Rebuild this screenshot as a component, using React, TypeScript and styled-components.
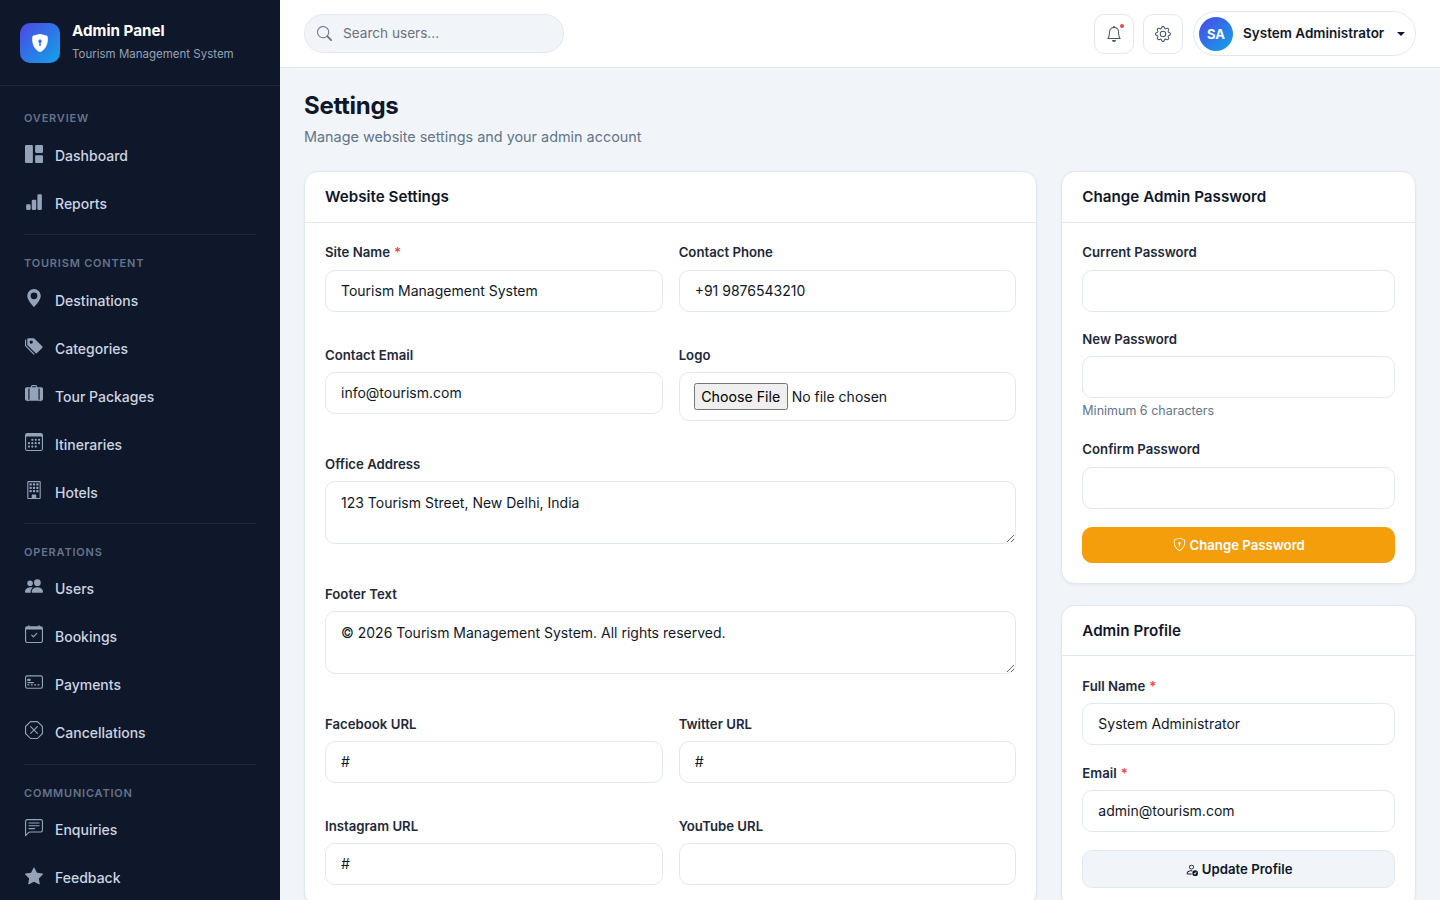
import React from "react";
import styled, { createGlobalStyle } from "styled-components";
import {
  BsBarChartFill, BsBell, BsBuilding, BsCalendar3, BsCalendarCheck, BsChatLeftText, BsCreditCard2Front,
  BsGear, BsGeoAltFill, BsGrid1X2Fill, BsPeopleFill, BsPersonCheck, BsSearch, BsShieldLock, BsShieldLockFill,
  BsStarFill, BsSuitcaseLgFill, BsTagsFill, BsXOctagon,
} from "react-icons/bs";

const Global = createGlobalStyle`
  * { box-sizing: border-box; }
  html, body { margin: 0; height: 100%; overflow: hidden; }
  body { font-family: Inter, "Liberation Sans", sans-serif; background: #f1f5f9; color: #0f172a; }
`;

const Shell = styled.div`display: flex; height: 100vh; overflow: hidden;`;
const Sidebar = styled.aside`width: 280px; flex: none; background: #0f172a; height: 100%; overflow: hidden;`;
const Brand = styled.div`display: flex; align-items: center; gap: 12px; height: 86px; padding: 0 20px; border-bottom: 1px solid #1e293b;`;
const BrandIcon = styled.div`
  width: 40px; height: 40px; border-radius: 10px; background: linear-gradient(135deg, #4f46e5, #0ea5e9);
  display: flex; align-items: center; justify-content: center; color: #fff; font-size: 18px;
`;
const BrandText = styled.div`margin-bottom: 3px;`;
const BrandName = styled.div`font-size: 15.2px; line-height: 20px; font-weight: 700; color: #fff;`;
const BrandSub = styled.div`font-size: 11.5px; line-height: 16px; color: #94a3b8; margin-top: 5px;`;
const Nav = styled.nav`padding: 24px 24px 0;`;
const Section = styled.div<{ $lead: number }>`
  border-top: ${(p) => (p.$lead ? "1px solid #1e293b" : "0")};
  margin-top: ${(p) => p.$lead}px;
  padding-top: ${(p) => (p.$lead ? 20 : 0)}px;
`;
const SectionLabel = styled.div<{ $gap: number }>`
  font-size: 11px; line-height: 16px; font-weight: 600; letter-spacing: 0.8px; text-transform: uppercase; color: #64748b; margin-bottom: ${(p) => p.$gap}px;
`;
const NavItem = styled.a`
  display: flex; align-items: center; gap: 12px; height: 48px; color: #cbd5e1; font-size: 14px; font-weight: 500;
  svg { width: 18px; height: 18px; flex: none; color: #94a3b8; position: relative; top: -2px; margin-left: 1px; }
`;

const Main = styled.div`flex: 1; min-width: 0; height: 100%; overflow: hidden;`;
const Topbar = styled.header`
  height: 68px; background: #fff; border-bottom: 1px solid #e2e8f0; padding: 0 24px; display: flex; align-items: center; justify-content: space-between;
`;
const Search = styled.div`
  width: 260px; height: 39px; border-radius: 20px; background: #f1f5f9; border: 1px solid #e2e8f0; display: flex; align-items: center; gap: 11px; padding: 0 12px;
  color: #64748b; svg { width: 15px; height: 15px; flex: none; }
`;
const SearchInput = styled.input`
  border: 0; background: transparent; outline: 0; font: 400 13.6px Inter, sans-serif; flex: 1; min-width: 0; padding: 0 0 2px;
  &::placeholder { color: #6b7280; opacity: 1; }
`;
const Actions = styled.div`display: flex; align-items: center; gap: 9px;`;
const IconButton = styled.button`
  position: relative; width: 40px; height: 40px; border-radius: 10px; background: #fff; border: 1px solid #e2e8f0; color: #475569;
  display: flex; align-items: center; justify-content: center; padding: 0; font-size: 16px;
`;
const Dot = styled.span`position: absolute; top: 9px; right: 9px; width: 4px; height: 4px; border-radius: 50%; background: #ef4444;`;
const UserChip = styled.div`
  height: 45px; width: 223px; margin-left: 1px; border: 1px solid #e2e8f0; border-radius: 23px; background: #fff; display: flex; align-items: center; padding: 0 10px 0 5px;
`;
const Avatar = styled.div`
  width: 34px; height: 34px; border-radius: 50%; background: linear-gradient(135deg, #4f46e5, #0ea5e9); color: #fff; font-size: 13px; font-weight: 700;
  display: flex; align-items: center; justify-content: center; flex: none;
`;
const UserName = styled.span`font-size: 13.5px; font-weight: 600; margin: 0 0 2px 10px; flex: 1; white-space: nowrap; color: #0f172a;`;
const Caret = styled.span`width: 0; height: 0; border-top: 4px solid #0f172a; border-left: 4px solid transparent; border-right: 4px solid transparent;`;

const Content = styled.main`padding: 24px;`;
const Title = styled.h1`margin: 0; font-size: 24px; line-height: 28px; font-weight: 700; letter-spacing: -0.3px; color: #0f172a;`;
const Subtitle = styled.p`margin: 6px 0 23px; font-size: 14.4px; line-height: 22px; color: #64748b;`;
const Columns = styled.div`display: grid; grid-template-columns: minmax(0, 733.33fr) minmax(0, 354.67fr); gap: 24px; align-items: start;`;
const Stack = styled.div`display: flex; flex-direction: column; gap: 21.25px;`;
const Card = styled.section`
  background: #fff; border: 1px solid #e2e8f0; border-radius: 14px; box-shadow: 0 1px 3px rgba(15, 23, 42, 0.05); overflow: hidden;
`;
const CardHeader = styled.div`height: 50.5px; padding: 0 20px 1px; display: flex; align-items: center; border-bottom: 1px solid #e2e8f0;`;
const CardTitle = styled.h2`margin: 0; font-size: 15.2px; font-weight: 600; color: #0f172a;`;
const CardBody = styled.div`padding: 20.75px 20px 20px;`;
const FormGrid = styled.div`display: grid; grid-template-columns: 1fr 1fr; column-gap: 16px; row-gap: 34px;`;
const Field = styled.div<{ $wide?: boolean; $gap?: number }>`
  grid-column: ${(p) => (p.$wide ? "1 / -1" : "auto")};
  margin-bottom: ${(p) => p.$gap ?? 0}px;
`;
const Label = styled.label`display: block; font-size: 13.2px; line-height: 18px; font-weight: 600; margin-bottom: 8.25px; color: #1e293b;`;
const Required = styled.span`color: #ef4444; margin-left: 4px;`;
const Input = styled.input`
  display: block; width: 100%; height: 42px; border: 1px solid #e2e8f0; border-radius: 10px; padding: 0 15px 1px; font: 400 14px Inter, sans-serif; color: #0f172a; background: #fff; outline: 0;
`;
const FileInput = styled(Input)`
  height: 49px; padding: 10px 14px;
  &::file-selector-button { height: 27px; width: 94px; padding: 0; margin-right: 4px; font: 400 14.2px Inter, sans-serif; }
`;
const TextArea = styled.textarea`
  display: block; width: 100%; height: 63px; border: 1px solid #e2e8f0; border-radius: 10px; padding: 10px 15px; font: 400 14px/21px Inter, sans-serif; color: #0f172a; background: #fff; outline: 0;
`;
const Hint = styled.div`font-size: 12.5px; line-height: 16px; color: #64748b; margin-top: 5.25px;`;
const ActionButton = styled.button<{ $primary?: boolean }>`
  width: 100%; height: ${(p) => (p.$primary ? 36 : 38)}px; border-radius: 10px; border: 1px solid ${(p) => (p.$primary ? "#f59e0b" : "#e2e8f0")};
  background: ${(p) => (p.$primary ? "#f59e0b" : "#f1f5f9")}; color: ${(p) => (p.$primary ? "#fff" : "#0f172a")};
  font: 600 13.2px Inter, sans-serif; display: flex; align-items: center; justify-content: center; gap: 4px; padding: 0;
  svg { width: 13px; height: 13px; }
`;

const groups = [
  { label: "Overview", gap: 5.7, lead: 0, items: [[BsGrid1X2Fill, "Dashboard"], [BsBarChartFill, "Reports"]] },
  { label: "Tourism Content", gap: 5.7, lead: 6.1, items: [[BsGeoAltFill, "Destinations"], [BsTagsFill, "Categories"], [BsSuitcaseLgFill, "Tour Packages"], [BsCalendar3, "Itineraries"], [BsBuilding, "Hotels"]] },
  { label: "Operations", gap: 4.7, lead: 6.1, items: [[BsPeopleFill, "Users"], [BsCalendarCheck, "Bookings"], [BsCreditCard2Front, "Payments"], [BsXOctagon, "Cancellations"]] },
  { label: "Communication", gap: 4.7, lead: 7.6, items: [[BsChatLeftText, "Enquiries"], [BsStarFill, "Feedback"]] },
] as const;

export default function App() {
  return (
    <Shell>
      <Global />
      <Sidebar>
        <Brand>
          <BrandIcon><BsShieldLockFill /></BrandIcon>
          <BrandText>
            <BrandName>Admin Panel</BrandName>
            <BrandSub>Tourism Management System</BrandSub>
          </BrandText>
        </Brand>
        <Nav>
          {groups.map((g) => (
            <Section key={g.label} $lead={g.lead}>
              <SectionLabel $gap={g.gap}>{g.label}</SectionLabel>
              {g.items.map(([Icon, name]) => (
                <NavItem key={name}><Icon />{name}</NavItem>
              ))}
            </Section>
          ))}
        </Nav>
      </Sidebar>
      <Main>
        <Topbar>
          <Search><BsSearch /><SearchInput placeholder="Search users..." /></Search>
          <Actions>
            <IconButton><BsBell /><Dot /></IconButton>
            <IconButton><BsGear /></IconButton>
            <UserChip>
              <Avatar>SA</Avatar>
              <UserName>System Administrator</UserName>
              <Caret />
            </UserChip>
          </Actions>
        </Topbar>
        <Content>
          <Title>Settings</Title>
          <Subtitle>Manage website settings and your admin account</Subtitle>
          <Columns>
            <Card>
              <CardHeader><CardTitle>Website Settings</CardTitle></CardHeader>
              <CardBody>
                <FormGrid>
                  <Field><Label>Site Name<Required>*</Required></Label><Input defaultValue="Tourism Management System" /></Field>
                  <Field><Label>Contact Phone</Label><Input defaultValue="+91 9876543210" /></Field>
                  <Field><Label>Contact Email</Label><Input defaultValue="info@tourism.com" /></Field>
                  <Field><Label>Logo</Label><FileInput type="file" /></Field>
                  <Field $wide $gap={6.75}><Label>Office Address</Label><TextArea defaultValue="123 Tourism Street, New Delhi, India" /></Field>
                  <Field $wide $gap={6.75}><Label>Footer Text</Label><TextArea defaultValue="© 2026 Tourism Management System. All rights reserved." /></Field>
                  <Field><Label>Facebook URL</Label><Input defaultValue="#" /></Field>
                  <Field><Label>Twitter URL</Label><Input defaultValue="#" /></Field>
                  <Field><Label>Instagram URL</Label><Input defaultValue="#" /></Field>
                  <Field><Label>YouTube URL</Label><Input /></Field>
                </FormGrid>
              </CardBody>
            </Card>
            <Stack>
              <Card>
                <CardHeader><CardTitle>Change Admin Password</CardTitle></CardHeader>
                <CardBody>
                  <Field $gap={18}><Label>Current Password</Label><Input type="password" /></Field>
                  <Field $gap={21.25}><Label>New Password</Label><Input type="password" /><Hint>Minimum 6 characters</Hint></Field>
                  <Field $gap={18}><Label>Confirm Password</Label><Input type="password" /></Field>
                  <ActionButton $primary><BsShieldLock />Change Password</ActionButton>
                </CardBody>
              </Card>
              <Card>
                <CardHeader><CardTitle>Admin Profile</CardTitle></CardHeader>
                <CardBody>
                  <Field $gap={18.25}><Label>Full Name<Required>*</Required></Label><Input defaultValue="System Administrator" /></Field>
                  <Field $gap={18.25}><Label>Email<Required>*</Required></Label><Input defaultValue="admin@tourism.com" /></Field>
                  <ActionButton><BsPersonCheck />Update Profile</ActionButton>
                </CardBody>
              </Card>
            </Stack>
          </Columns>
        </Content>
      </Main>
    </Shell>
  );
}
